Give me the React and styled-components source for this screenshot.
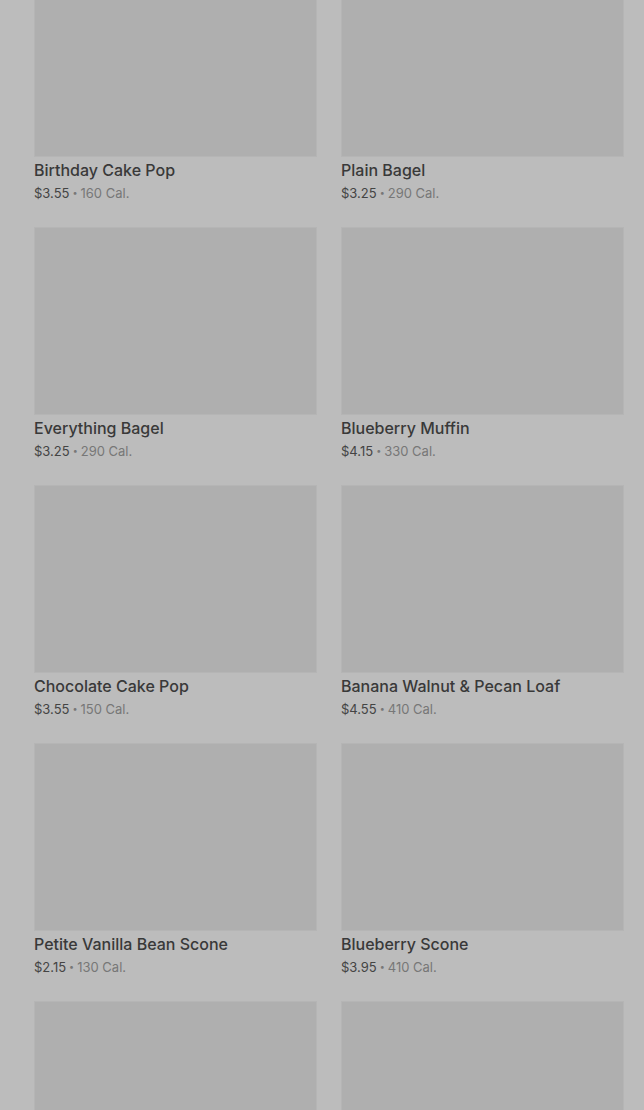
import React from 'react';
import styled, { createGlobalStyle } from 'styled-components';

const GlobalStyle = createGlobalStyle`
  html, body {
    margin: 0;
    padding: 0;
    background: #bcbcbc;
    font-family: Inter, Roboto, "Liberation Sans", sans-serif;
    overflow: hidden;
  }
`;

const Page = styled.div`
  width: 644px;
  height: 1110px;
  overflow: hidden;
  background: #bcbcbc;
`;

const Grid = styled.div`
  display: grid;
  grid-template-columns: 283px 283px;
  column-gap: 24px;
  row-gap: 25px;
  padding-left: 34px;
  margin-top: -31px;
`;

const Card = styled.div`
  display: flex;
  flex-direction: column;
`;

const Thumb = styled.div`
  height: 188px;
  background: #afafaf;
  box-shadow: inset 0 0 0 1px #b5b5b5;
`;

const Name = styled.div`
  margin-top: 3px;
  font-size: 16px;
  line-height: 20px;
  font-weight: 500;
  color: #393939;
`;

const Meta = styled.div`
  display: flex;
  align-items: center;
  margin-top: 4px;
  font-size: 13px;
  line-height: 18px;
  height: 18px;
  color: #444;
`;

const Cal = styled.span`
  color: #777;
`;

const Dot = styled.span`
  color: #777;
  margin: 0 3px;
  font-size: 9px;
`;

const items = [
  { name: 'Birthday Cake Pop', price: '$3.55', cal: '160 Cal.' },
  { name: 'Plain Bagel', price: '$3.25', cal: '290 Cal.' },
  { name: 'Everything Bagel', price: '$3.25', cal: '290 Cal.' },
  { name: 'Blueberry Muffin', price: '$4.15', cal: '330 Cal.' },
  { name: 'Chocolate Cake Pop', price: '$3.55', cal: '150 Cal.' },
  { name: 'Banana Walnut & Pecan Loaf', price: '$4.55', cal: '410 Cal.' },
  { name: 'Petite Vanilla Bean Scone', price: '$2.15', cal: '130 Cal.' },
  { name: 'Blueberry Scone', price: '$3.95', cal: '410 Cal.' },
  { name: 'cheese-danish' },
  { name: 'butter-croissant' },
];

const App = () => {
  return (
    <Page>
      <GlobalStyle />
      <Grid>
        {items.map((item) => (
          <Card key={item.name}>
            <Thumb />
            {item.price && (
              <>
                <Name>{item.name}</Name>
                <Meta>
                  {item.price}
                  <Dot>•</Dot>
                  <Cal>{item.cal}</Cal>
                </Meta>
              </>
            )}
          </Card>
        ))}
      </Grid>
    </Page>
  );
};

export default App;
